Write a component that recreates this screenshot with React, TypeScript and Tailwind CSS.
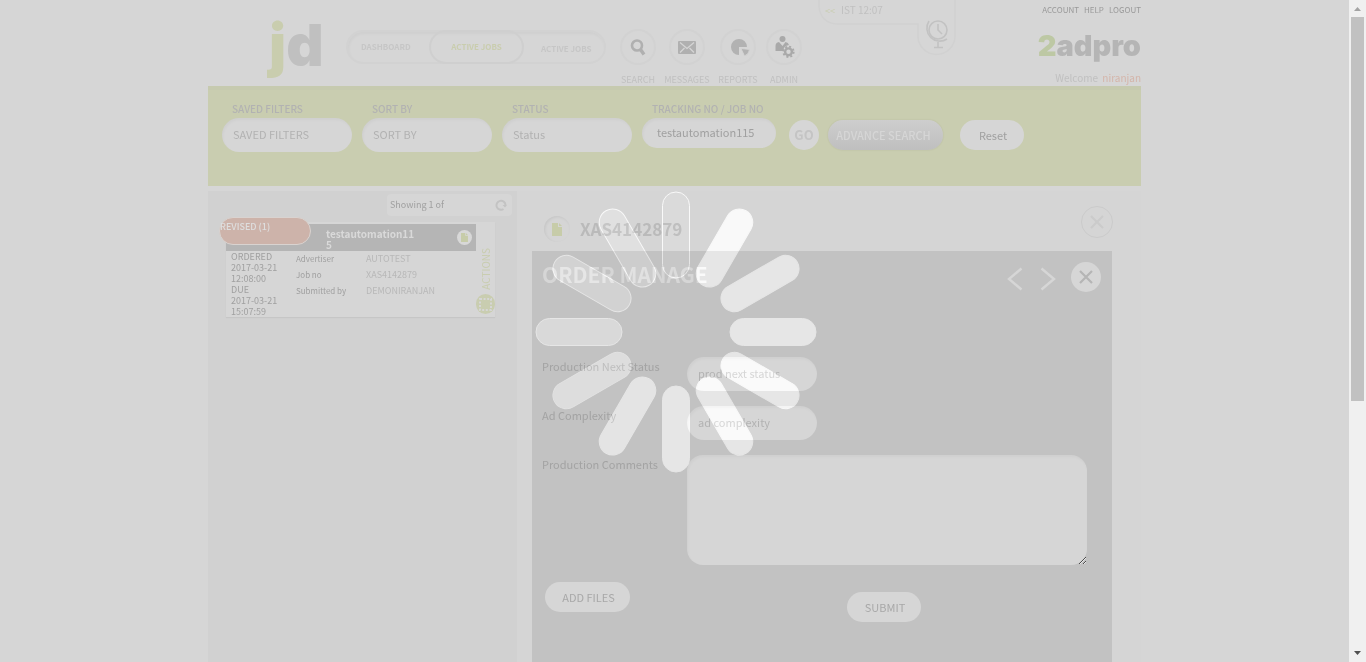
import type { ReactNode } from 'react';

const inset = 'shadow-[inset_1px_2px_3px_rgba(0,0,0,0.03)]';

function Filter({ id, label, value }: { id: string; label: string; value: string }) {
  return (
    <div className="flex flex-col">
      <label htmlFor={id} className="pl-2.5 text-[10px] leading-[18px] font-medium text-[#b2b2b2]">
        {label}
      </label>
      <select
        id={id}
        className={`h-[34px] w-[130px] appearance-none rounded-full bg-[#d6d6d6] px-[11px] pb-0.5 text-[11px] text-[#b2b2b2] ${inset}`}
      >
        <option>{value}</option>
      </select>
    </div>
  );
}

function IconLink({ label, width, children }: { label: string; width: string; children: ReactNode }) {
  return (
    <a href="#" className={`flex flex-col items-center ${width}`}>
      <span className="flex h-9 w-9 items-center justify-center rounded-full border-2 border-[#d2d2d2]">{children}</span>
      <span className="mt-[7px] text-[9px] leading-4 text-[#c0c0c0]">{label}</span>
    </a>
  );
}

function Cross({ color }: { color: string }) {
  return (
    <svg width="14" height="14" viewBox="0 0 14 14" fill="none" stroke={color} strokeWidth="2.2" aria-hidden="true">
      <path d="M1 1l12 12M13 1L1 13" />
    </svg>
  );
}

function Doc({ width, height }: { width: number; height: number }) {
  return (
    <svg width={width} height={height} viewBox="0 0 10 13" aria-hidden="true">
      <path d="M0 0h6v4h4v9H0z" fill="#c7cca9" />
      <path d="M7 0l3 3H7z" fill="#c7cca9" />
    </svg>
  );
}

function Header() {
  return (
    <header className="flex h-[86px] items-start pl-[57px]">
      <a href="#" className="h-20 w-[81px] pl-1 font-['Inter'] text-[58px] leading-[90px] font-black text-[#c0c0c0]">
        <span className="text-[#c9cdae]">j</span>d
      </a>
      <nav
        className={`mt-[30px] flex h-[34px] w-[260px] items-center rounded-full border-2 border-[#d2d2d2] text-[8px] font-bold text-[#c6c6c6] ${inset}`}
      >
        <a href="#" className="w-[81px] pl-[13px]">DASHBOARD</a>
        <a
          href="#"
          className="flex h-[34px] w-[95px] items-center justify-center rounded-full border-2 border-[#cfcfcf] text-[#c9cdae]"
        >
          ACTIVE JOBS
        </a>
        <a href="#" className="pt-1 pl-[17px]">ACTIVE JOBS</a>
      </nav>
      <div className="mt-[29px] ml-3.5 flex gap-2">
        <IconLink label="SEARCH" width="w-9">
          <svg width="16" height="17" viewBox="0 0 16 17" fill="none" stroke="#b0b0b0" aria-hidden="true">
            <circle cx="7" cy="6.5" r="5" strokeWidth="2.6" />
            <path d="M10.5 10.5l3.5 5" strokeWidth="3.4" />
          </svg>
        </IconLink>
        <IconLink label="MESSAGES" width="w-[46px]">
          <svg width="18" height="13" viewBox="0 0 18 13" aria-hidden="true">
            <rect width="18" height="13" rx="1" fill="#b0b0b0" />
            <path d="M2 1.5l7 6 7-6M2 11.5L6.5 7M16 11.5L11.5 7" fill="none" stroke="#d6d6d6" strokeWidth="1.2" />
          </svg>
        </IconLink>
        <IconLink label="REPORTS" width="w-10">
          <svg width="20" height="18" viewBox="0 0 20 18" className="ml-1" aria-hidden="true">
            <path d="M9 9h8a8 8 0 1 0-8 8z" fill="#b2b2b2" />
            <path d="M11 10.500l8.500 1a8 8 0 0 1-5 6.500z" fill="#b2b2b2" stroke="#d6d6d6" strokeWidth=".8" />
          </svg>
        </IconLink>
        <IconLink label="ADMIN" width="w-9">
          <svg width="20" height="22" viewBox="0 0 20 22" className="ml-0.5" aria-hidden="true">
            <circle cx="7.500" cy="3" r="3" fill="#a9a9a9" />
            <path d="M0.500 15V10q0-3.500 3.500-4l3.500 4 3-4q3 .5 3.500 3-6 1-5.500 6z" fill="#a9a9a9" />
            <circle cx="13.500" cy="15.800" r="3.400" fill="none" stroke="#a9a9a9" strokeWidth="2.400" />
            <circle cx="13.500" cy="15.800" r="5.200" fill="none" stroke="#a9a9a9" strokeWidth="1.800" strokeDasharray="2.04 2.040" />
          </svg>
        </IconLink>
      </div>
      <div className="relative ml-4 h-14 w-[140px]">
        <svg width="140" height="56" viewBox="0 0 140 56" fill="none" className="absolute inset-0" aria-hidden="true">
          <path d="M1 0v7q2 16 18 17h81v12a18.500 18.500 0 0 0 37 0V0" stroke="#d1d1d1" strokeWidth="1.500" />
          <g stroke="#c2c2c2" strokeWidth="1.600">
            <circle cx="120" cy="30" r="9" />
            <path d="M120 24v6l4 4M111 21a13 13 0 0 0 18 18M120 42v5M116 47.500h9" />
          </g>
        </svg>
        <p className="relative pt-0.5 pl-[7px] text-[10px] leading-4 text-[#c0c0c0]">
          <span className="mr-1.5 text-[9px] text-[#c9cdb0]">&lt;&lt;</span>IST 12:07
        </p>
      </div>
      <div className="ml-auto flex flex-col items-end">
        <div className="flex gap-[5px] pt-0.5 text-[8px] leading-4 text-[#999]">
          <a href="#">ACCOUNT</a>
          <a href="#">HELP</a>
          <a href="#">LOGOUT</a>
        </div>
        <a href="#" className="mt-2 font-['Inter'] text-[29px] leading-10 font-black text-[#b5b5b5]">
          <span className="text-[#bdc8a4]">2</span>adpro
        </a>
        <p className="mt-1 text-[10px] leading-4 text-[#c0c0c0]">
          Welcome <span className="ml-0.5 text-[#d4b5aa]">niranjan</span>
        </p>
      </div>
    </header>
  );
}

function Filters() {
  return (
    <section className="flex h-[100px] gap-2.5 border-t-4 border-[#c6caaf] bg-[#c9cdb0] pt-2.5 pl-3.5">
      <Filter id="saved" label="SAVED FILTERS" value="SAVED FILTERS" />
      <Filter id="sort" label="SORT BY" value="SORT BY" />
      <Filter id="status" label="STATUS" value="Status" />
      <div className="flex flex-col">
        <label htmlFor="tracking" className="pl-2.5 text-[10px] leading-[18px] font-medium text-[#b2b2b2]">
          TRACKING NO / JOB NO
        </label>
        <input
          id="tracking"
          defaultValue="testautomation115"
          className={`h-[30px] w-[134px] rounded-full bg-[#d6d6d6] px-[15px] pb-0.5 text-[11px] text-[#a0a0a0] ${inset}`}
        />
      </div>
      <div className="flex items-start pt-5">
        <button className="ml-[3px] h-[30px] w-[30px] rounded-full bg-[#d6d6d6] text-[13px] font-bold text-[#c4c4c4]">GO</button>
        <button className="ml-[9px] h-[30px] w-[115px] rounded-full bg-linear-to-b from-[#cecece] to-[#bfbfbf] pr-1 text-[11px] font-medium whitespace-nowrap text-[#d6d6d6] shadow-[0_0_2px_rgba(0,0,0,0.1)]">
          ADVANCE SEARCH
        </button>
        <button className="ml-[17px] h-[30px] w-16 rounded-full bg-[#d6d6d6] pl-0.5 text-[11px] text-[#a0a0a0]">Reset</button>
      </div>
    </section>
  );
}

function JobList() {
  return (
    <aside className="w-[309px] shrink-0 bg-[#d1d1d1] pt-[3px]">
      <div className="mr-[5px] ml-auto flex h-[22px] w-[125px] items-center justify-between rounded-sm bg-[#d6d6d6] pr-[5px] pl-[3px] text-[9px] text-[#a0a0a0]">
        Showing 1 of
        <button aria-label="Refresh">
          <svg width="12" height="12" viewBox="0 0 12 12" fill="none" stroke="#c3c3c3" strokeWidth="2" aria-hidden="true">
            <path d="M8.500 10A4.500 4.500 0 1 1 10.500 6" />
            <path d="M7.500 6h4.500l-2 2.500z" fill="#c3c3c3" stroke="none" />
          </svg>
        </button>
      </div>
      <article className="relative mt-1.5 ml-[18px] flex h-[95px] w-[269px] bg-[#d6d6d6] shadow-[0_1px_1px_rgba(0,0,0,0.05)]">
        <div className="w-[250px] pt-0.5">
          <div className="flex h-[27px] items-center bg-[#b5b5b5] pr-1 pl-[100px]">
            <h2 className="w-[91px] pt-0.5 text-[10px] leading-[11px] font-bold break-all text-[#d9d9d9]">testautomation115</h2>
            <span className="ml-auto flex h-[15px] w-[15px] items-center justify-center rounded-full bg-[#d8d8d8]">
              <Doc width={7} height={9} />
            </span>
          </div>
          <div className="flex items-start">
            <p className="w-[70px] pl-[5px] text-[9px] leading-[11px] text-[#a0a0a0]">
              ORDERED
              <br />
              2017-03-21
              <br />
              12:08:00
              <br />
              DUE
              <br />
              2017-03-21
              <br />
              15:07:59
            </p>
            <dl className="grid grid-cols-[70px_1fr] text-[9px] leading-4 text-[#b8b8b8]">
              <dt className="text-[8px] text-[#a0a0a0]">Advertiser</dt>
              <dd>AUTOTEST</dd>
              <dt className="text-[8px] text-[#a0a0a0]">Job no</dt>
              <dd>XAS4142879</dd>
              <dt className="text-[8px] text-[#a0a0a0]">Submitted by</dt>
              <dd>DEMONIRANJAN</dd>
            </dl>
          </div>
        </div>
        <div className="flex w-[19px] flex-col items-center justify-end pb-[3px]">
          <span className="rotate-180 text-[10px] leading-4 text-[#c9cdb0] [writing-mode:vertical-rl]">ACTIONS</span>
          <button aria-label="Actions" className="mt-1 flex h-5 w-[19px] items-center justify-center rounded-full bg-[#c9cdb0]">
            <svg width="13" height="13" viewBox="0 0 13 13" fill="none" stroke="#d6d6d6" strokeWidth="2" strokeDasharray="2 1.600" aria-hidden="true">
              <rect x="1" y="1" width="11" height="11" />
            </svg>
          </button>
        </div>
        <span className="absolute -top-[5px] -left-[7px] h-7 w-[92px] rounded-full border border-[#d9d3d0] bg-[#cdb3aa] text-[9px] leading-[18px] font-medium text-[#dedede]">
          REVISED (1)
        </span>
      </article>
    </aside>
  );
}

function Row({ id, label, children }: { id: string; label: string; children: ReactNode }) {
  return (
    <div className="flex items-start">
      <label htmlFor={id} className="w-[145px] shrink-0 text-[11px] leading-[18px] text-[#a3a3a3]">
        {label}
      </label>
      {children}
    </div>
  );
}

function OrderPanel() {
  const field = `h-[34px] w-[130px] appearance-none rounded-full bg-[#d6d6d6] px-[11px] pb-0.5 text-[11px] text-[#b2b2b2] ${inset}`;
  return (
    <main className="flex flex-1 flex-col bg-[#d5d5d5] pr-[29px] pl-[15px]">
      <div className="flex h-[60px] shrink-0 items-center pt-4 pl-3">
        <span className="flex h-[26px] w-[26px] items-center justify-center rounded-full shadow-[inset_1px_1px_3px_rgba(0,0,0,0.08)]">
          <Doc width={10} height={13} />
        </span>
        <h1 className="ml-2.5 text-[17px] leading-6 font-bold text-[#bababa]">XAS4142879</h1>
        <button
          aria-label="Close job"
          className="-mt-3.5 -mr-px ml-auto flex h-8 w-8 items-center justify-center rounded-full border border-[#cbcbcb]"
        >
          <Cross color="#cbcbcb" />
        </button>
      </div>
      <section className="flex-1 bg-[#c2c2c2] px-2.5">
        <div className="flex h-[106px] items-start pt-[11px]">
          <h2 className="text-[21px] leading-6 font-bold text-[#d6d6d6]">ORDER MANAGE</h2>
          <div className="ml-auto flex items-center">
            <button aria-label="Previous" className="pt-1">
              <svg width="16" height="24" viewBox="0 0 16 24" fill="none" stroke="#d6d6d6" strokeWidth="2.400" aria-hidden="true">
                <path d="M14.500 1.500L2 12l12.500 10.500" />
              </svg>
            </button>
            <button aria-label="Next" className="ml-[17px] pt-1">
              <svg width="16" height="24" viewBox="0 0 16 24" fill="none" stroke="#d6d6d6" strokeWidth="2.400" aria-hidden="true">
                <path d="M1.500 1.500L14 12 1.500 22.500" />
              </svg>
            </button>
            <button aria-label="Close" className="mr-px ml-[15px] flex h-[30px] w-[30px] items-center justify-center rounded-full bg-[#d6d6d6]">
              <Cross color="#b5b5b5" />
            </button>
          </div>
        </div>
        <form className="flex flex-col gap-[15px]">
          <Row id="next-status" label="Production Next Status">
            <select id="next-status" className={field}>
              <option>prod next status</option>
            </select>
          </Row>
          <Row id="complexity" label="Ad Complexity">
            <select id="complexity" className={field}>
              <option>ad complexity</option>
            </select>
          </Row>
          <Row id="comments" label="Production Comments">
            <textarea id="comments" className={`h-[110px] w-[400px] resize rounded-2xl bg-[#d6d6d6] ${inset}`} />
          </Row>
          <div className="flex items-start pt-0.5 pl-[3px]">
            <button type="button" className="h-[30px] w-[85px] rounded-full bg-[#d6d6d6] pl-0.5 text-[11px] text-[#a8a8a8]">
              ADD FILES
            </button>
            <button type="submit" className="mt-2.5 ml-[217px] h-[30px] w-[74px] rounded-full bg-[#d6d6d6] pl-0.5 text-[11px] text-[#a8a8a8]">
              SUBMIT
            </button>
          </div>
        </form>
      </section>
    </main>
  );
}

const petals = [
  { fill: '#050505', edge: '#242424' },
  { fill: '#242424', edge: '#242424' },
  { fill: '#242424', edge: '#242424' },
  { fill: '#242424', edge: '#242424' },
  { fill: '#242424', edge: '#242424' },
  { fill: '#242424', edge: '#242424' },
  { fill: '#242424', edge: '#242424' },
  { fill: '#222222', edge: '#242424' },
  { fill: '#1b1b1b', edge: '#202020' },
  { fill: '#171717', edge: '#242424' },
  { fill: '#101010', edge: '#242424' },
  { fill: '#0b0b0b', edge: '#242424' },
];

function Spinner() {
  return (
    <div role="status" aria-label="Loading" className="pointer-events-none absolute inset-0 flex items-center justify-center mix-blend-plus-lighter">
      <svg width="284" height="284" viewBox="-143 -143 284 284" aria-hidden="true">
        {petals.map((p, i) => (
          <rect key={i} x="-13.500" y="-140" width="27" height="86" rx="13.500" fill={p.fill} stroke={p.edge} transform={`rotate(${i * 30})`} />
        ))}
      </svg>
    </div>
  );
}

function ScrollRail() {
  return (
    <div className="flex w-[17px] shrink-0 flex-col items-center bg-[#f0f0f0]" aria-hidden="true">
      <svg width="17" height="17" viewBox="0 0 17 17">
        <path d="M5 11l3.500-4 3.500 4z" fill="#a3a3a3" />
      </svg>
      <div className="h-[58%] w-[13px] bg-[#c1c1c1]" />
      <div className="flex-1" />
      <svg width="17" height="17" viewBox="0 0 17 17">
        <path d="M5 6l3.500 4L12 6z" fill="#505050" />
      </svg>
    </div>
  );
}

export default function App() {
  return (
    <div className="flex h-screen overflow-hidden bg-[#d6d6d6] font-['Noto_Sans_CJK_SC',sans-serif]">
      <div className="relative flex-1 overflow-hidden">
        <div className="mx-auto flex h-full max-w-[933px] flex-col">
          <Header />
          <Filters />
          <div className="mt-[5px] flex flex-1">
            <JobList />
            <OrderPanel />
          </div>
        </div>
        <Spinner />
      </div>
      <ScrollRail />
    </div>
  );
}
